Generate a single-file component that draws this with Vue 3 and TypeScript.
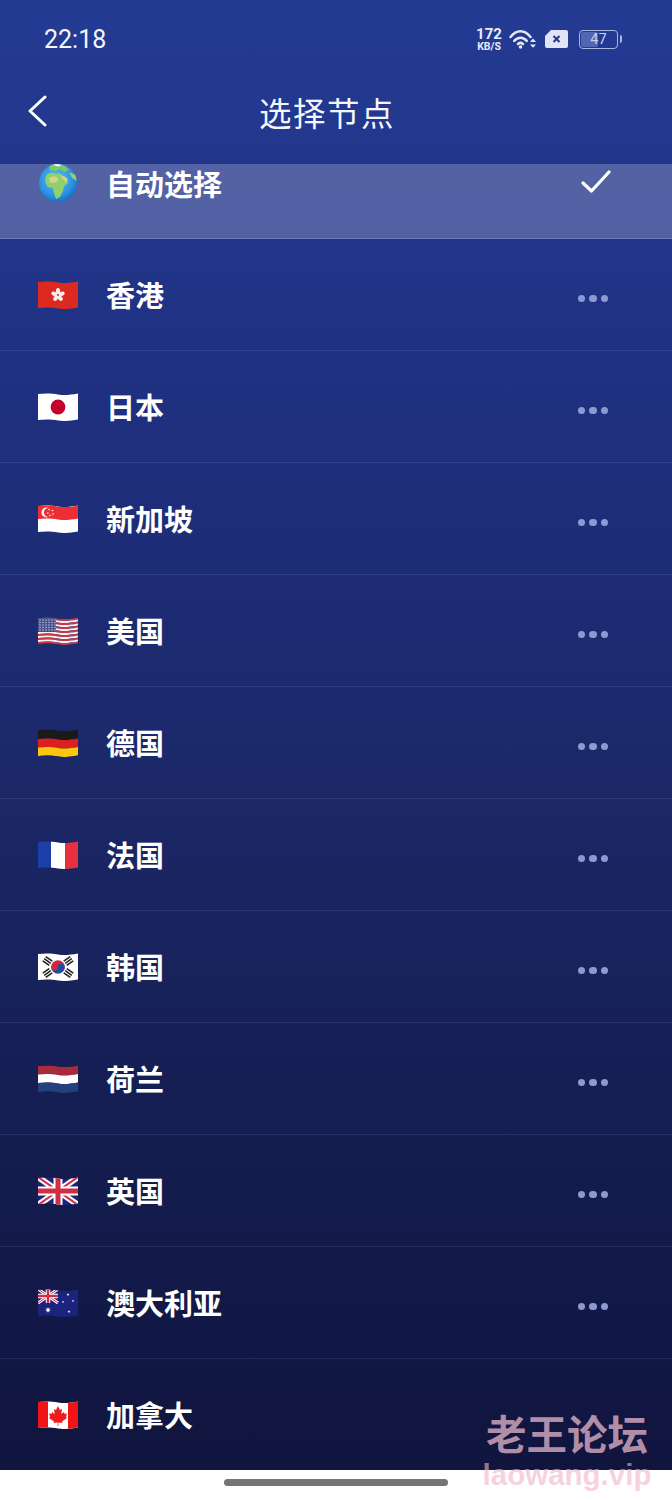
<script setup lang="ts">
const nodes = [
  { code: "hk", name: "香港" },
  { code: "jp", name: "日本" },
  { code: "sg", name: "新加坡" },
  { code: "us", name: "美国" },
  { code: "de", name: "德国" },
  { code: "fr", name: "法国" },
  { code: "kr", name: "韩国" },
  { code: "nl", name: "荷兰" },
  { code: "gb", name: "英国" },
  { code: "au", name: "澳大利亚" },
  { code: "ca", name: "加拿大", noMore: true },
];

// wavy band, the flags are drawn like the waving emoji
const band = (a: number, b: number) =>
  `M0 ${a}C8 ${a - 1} 14 ${a - 0.5} 20 ${a + 0.5}C26 ${a + 1.5} 32 ${a + 1} 40 ${a - 0.5}` +
  `L40 ${b - 0.5}C32 ${b + 1} 26 ${b + 1.5} 20 ${b + 0.5}C14 ${b - 0.5} 8 ${b - 1} 0 ${b}Z`;

const star = (cx: number, cy: number, r: number, n = 5) => {
  const pts: string[] = [];
  for (let i = 0; i < n * 2; i++) {
    const rad = i % 2 ? r * 0.42 : r;
    const a = (Math.PI * i) / n - Math.PI / 2;
    pts.push(`${(cx + rad * Math.cos(a)).toFixed(2)},${(cy + rad * Math.sin(a)).toFixed(2)}`);
  }
  return pts.join(" ");
};

const body = band(1, 27);
const usStripes = Array.from({ length: 13 }, (_, i) => band(1 + i * 2, 3 + i * 2));
const petals = [0, 72, 144, 216, 288];
const auStars = [
  [30, 5.5, 1.5],
  [25, 13, 1.3],
  [35, 12, 1.3],
  [31, 22.5, 1.5],
  [10, 21, 3],
];
const krBars = [
  [9.5, 8, 35],
  [30.5, 8, -35],
  [9.5, 20, -35],
  [30.5, 20, 35],
];
</script>

<template>
  <div class="page">
    <div class="screen">
      <header class="top">
        <div class="status">
          <span class="time">22:18</span>
          <div class="status-icons">
            <div class="speed">
              <span class="speed-num">172</span>
              <span class="speed-unit">KB/S</span>
            </div>
            <svg class="wifi" width="27" height="19" viewBox="0 0 27 19" fill="none" stroke="#e3e8f6" stroke-width="2.5" stroke-linecap="round">
              <path d="M1.5 7C7.5 -.6 15.5 -.6 21.5 7" />
              <path d="M5.2 10.8C9 6.6 14 6.6 17.8 10.8" />
              <path d="M9 14C10.6 12.6 12.4 12.6 14 14" />
              <circle cx="11.5" cy="17" r="1.8" fill="#e3e8f6" stroke="none" />
              <path d="M21 12h6l-3-3.4zM21 14.4h6l-3 3.4z" fill="#e3e8f6" stroke="none" />
            </svg>
            <svg class="sim" width="23" height="18" viewBox="0 0 23 18">
              <path d="M6 0H21a2 2 0 0 1 2 2V16a2 2 0 0 1-2 2H2a2 2 0 0 1-2-2V6z" fill="#dfe5f5" />
              <path d="M8.5 6l6 6M14.5 6l-6 6" stroke="#26397f" stroke-width="2" />
            </svg>
            <div class="battery">
              <div class="battery-fill" style="width: 47%"></div>
              <span class="battery-num">47</span>
              <i class="battery-nib"></i>
            </div>
          </div>
        </div>
        <nav class="bar">
          <svg class="back" width="20" height="32" viewBox="0 0 20 32" fill="none" stroke="#fff" stroke-width="3" stroke-linecap="round" stroke-linejoin="round">
            <path d="M18 2L3 16l15 14" />
          </svg>
          <h1 class="title">选择节点</h1>
        </nav>
      </header>

      <main class="list">
        <div class="row row-active">
          <svg class="flag globe-icon" width="40" height="40" viewBox="0 0 40 40">
            <defs>
              <radialGradient id="sea" cx="45%" cy="40%" r="65%">
                <stop offset="0" stop-color="#5cc4f2" />
                <stop offset="0.7" stop-color="#2a8fe0" />
                <stop offset="1" stop-color="#1565c0" />
              </radialGradient>
              <clipPath id="globe"><circle cx="20" cy="20" r="19" /></clipPath>
            </defs>
            <circle cx="20" cy="20" r="19" fill="url(#sea)" />
            <g clip-path="url(#globe)">
              <path d="M8 13C10 9 15 9 18 11L21 10C24 13 27 13 29 15L30 20L26 23L25 28L22 34L18 36L16 30L15 25L10 24L7 19Z" fill="#8fd16f" />
              <path d="M22 12C25 13 28 14 30 17L27 19L24 15Z" fill="#d8cf8a" />
              <path d="M11 15C14 13 18 13 20 15L19 19L13 20Z" fill="#d8d489" />
              <path d="M11 2C15 1 22 1 27 3L31 7L26 9L22 6L17 8L12 7Z" fill="#7cc969" />
              <path d="M14 1.5C17 .8 21 .8 24 2L20 3.5Z" fill="#f2f7fb" />
              <path d="M31 9L38 12L39 18L34 15Z" fill="#8fd16f" />
            </g>
          </svg>
          <span class="name">自动选择</span>
          <svg class="check" width="30" height="24" viewBox="0 0 30 24" fill="none" stroke="#fff" stroke-width="3.2" stroke-linecap="round" stroke-linejoin="round">
            <path d="M2 13l8.5 8L28 2" />
          </svg>
        </div>

        <div v-for="node in nodes" :key="node.code" class="row">
          <svg class="flag" width="40" height="28" viewBox="0 0 40 28">
            <defs>
              <clipPath :id="`clip-${node.code}`"><path :d="body" /></clipPath>
            </defs>
            <g :clip-path="`url(#clip-${node.code})`">
              <template v-if="node.code === 'hk'">
                <rect width="40" height="28" fill="#dc2a20" />
                <ellipse v-for="a in petals" :key="a" cx="20" cy="10.4" rx="2.1" ry="3.3" fill="#fdeeee" :transform="`rotate(${a} 20 14)`" />
                <circle cx="20" cy="14" r="1" fill="#dc2a20" />
              </template>

              <template v-else-if="node.code === 'jp'">
                <rect width="40" height="28" fill="#fff" />
                <circle cx="20" cy="14" r="7.4" fill="#c4002b" />
              </template>

              <template v-else-if="node.code === 'sg'">
                <rect width="40" height="28" fill="#fff" />
                <path :d="band(1, 14)" fill="#ee2e35" />
                <circle cx="8.5" cy="7.5" r="5" fill="#fff" />
                <circle cx="10.5" cy="7.5" r="4.6" fill="#ee2e35" />
                <circle v-for="p in [[11, 4.5], [14.5, 5.5], [15, 9], [12, 10.5], [9.8, 8]]" :key="p[0] + '-' + p[1]" :cx="p[0]" :cy="p[1]" r="0.8" fill="#fff" />
              </template>

              <template v-else-if="node.code === 'us'">
                <path v-for="(d, i) in usStripes" :key="i" :d="d" :fill="i % 2 ? '#f6f2f2' : '#c4384a'" />
                <rect width="18" height="15" fill="#47508c" />
                <g fill="#d6d9ec">
                  <template v-for="y in [3, 5.5, 8, 10.5, 13]" :key="y">
                    <circle v-for="x in [2, 5, 8, 11, 14, 17]" :key="x" :cx="x" :cy="y" r="0.65" />
                  </template>
                </g>
              </template>

              <template v-else-if="node.code === 'de'">
                <path :d="band(1, 10)" fill="#1a1a1a" />
                <path :d="band(10, 18.5)" fill="#dc1f1f" />
                <path :d="band(18.5, 27)" fill="#fbc80f" />
              </template>

              <template v-else-if="node.code === 'fr'">
                <rect width="13" height="28" fill="#1c3fa8" />
                <rect x="13" width="14" height="28" fill="#fff" />
                <rect x="27" width="13" height="28" fill="#e8303e" />
              </template>

              <template v-else-if="node.code === 'kr'">
                <rect width="40" height="28" fill="#fff" />
                <path d="M13.2 14a6.8 6.8 0 0 1 13.6 0z" fill="#d2283c" />
                <path d="M13.2 14a6.8 6.8 0 0 0 13.6 0z" fill="#1f4ea1" />
                <circle cx="16.6" cy="14" r="3.4" fill="#d2283c" />
                <circle cx="23.4" cy="14" r="3.4" fill="#1f4ea1" />
                <g v-for="b in krBars" :key="b[0] + '-' + b[1]" fill="#222" :transform="`rotate(${b[2]} ${b[0]} ${b[1]})`">
                  <rect :x="b[0] - 4" :y="b[1] - 3.4" width="8" height="1.6" />
                  <rect :x="b[0] - 4" :y="b[1] - 0.8" width="8" height="1.6" />
                  <rect :x="b[0] - 4" :y="b[1] + 1.8" width="8" height="1.6" />
                </g>
              </template>

              <template v-else-if="node.code === 'nl'">
                <path :d="band(1, 9.5)" fill="#a92a3a" />
                <path :d="band(9.5, 18)" fill="#fff" />
                <path :d="band(18, 27)" fill="#25407f" />
              </template>

              <template v-else-if="node.code === 'gb' || node.code === 'au'">
                <rect width="40" height="28" fill="#1a237e" />
                <g :transform="node.code === 'au' ? 'scale(.5)' : ''">
                  <path d="M0 0L40 28M40 0L0 28" stroke="#fff" stroke-width="6" />
                  <path d="M0 0L40 28M40 0L0 28" stroke="#cf2e45" stroke-width="2" />
                  <path d="M20 0V28M0 14H40" stroke="#fff" stroke-width="9" />
                  <path d="M20 0V28M0 14H40" stroke="#cf2e45" stroke-width="5" />
                </g>
                <template v-if="node.code === 'au'">
                  <polygon v-for="s in auStars" :key="s[0]" :points="star(s[0], s[1], s[2], s[0] === 10 ? 7 : 5)" fill="#fff" />
                </template>
              </template>

              <template v-else-if="node.code === 'ca'">
                <rect width="40" height="28" fill="#fff" />
                <rect width="10" height="28" fill="#f01414" />
                <rect x="30" width="10" height="28" fill="#f01414" />
                <path d="M20 5L22 9L24 8L23.4 13L26 11L26.6 13L29 12.6L28 16L29 17L24 20.5L24.4 22L20.4 21.4V25H19.6V21.4L15.6 22L16 20.5L11 17L12 16L11 12.6L13.4 13L14 11L16.6 13L16 8L18 9Z" fill="#ee1c1c" />
              </template>
            </g>
          </svg>
          <span class="name">{{ node.name }}</span>
          <div v-if="!node.noMore" class="more">
            <i></i><i></i><i></i>
          </div>
        </div>
      </main>
    </div>

    <footer class="foot">
      <div class="home"></div>
    </footer>

    <div class="mark">
      <div class="mark-cn">老王论坛</div>
      <div class="mark-en">laowang.vip</div>
    </div>
  </div>
</template>

<style scoped>
.page {
  position: relative;
  width: 672px;
  height: 1500px;
  overflow: hidden;
  background: #fff;
  font-family: "Noto Sans CJK SC", "Noto Sans", sans-serif;
}

.screen {
  height: 1470px;
  display: flex;
  flex-direction: column;
  background: linear-gradient(180deg, #243b94 0%, #1f2f7e 30%, #1b2766 55%, #141c4e 80%, #10153e 100%);
  color: #fff;
}

.top {
  height: 164px;
  flex: none;
}

.status {
  height: 76px;
  padding: 2px 54px 0 44px;
  box-sizing: border-box;
  display: flex;
  align-items: center;
  justify-content: space-between;
}

.time {
  font-family: Roboto, sans-serif;
  font-size: 25px;
  color: #f4f6fc;
}

.status-icons {
  display: flex;
  align-items: center;
}

.speed {
  width: 28px;
  display: flex;
  flex-direction: column;
  align-items: center;
  margin-right: 6px;
  font-family: Roboto, sans-serif;
  font-weight: 700;
  color: #e8ecf8;
}

.speed-num {
  font-size: 15px;
  line-height: 14px;
}

.speed-unit {
  font-size: 10.5px;
  line-height: 11px;
}

.sim {
  margin-left: 9px;
}

.battery {
  position: relative;
  width: 39px;
  height: 19px;
  margin-left: 11px;
  border: 1.5px solid #a9b6e2;
  border-radius: 4px;
  box-sizing: border-box;
  display: flex;
  align-items: center;
  justify-content: center;
}

.battery-fill {
  position: absolute;
  left: 1px;
  top: 1px;
  bottom: 1px;
  background: rgba(170, 185, 235, 0.35);
  border-radius: 2px;
}

.battery-num {
  position: relative;
  font-family: Roboto, sans-serif;
  font-size: 14.5px;
  color: #c9d2ef;
}

.battery-nib {
  position: absolute;
  right: -5px;
  top: 4px;
  width: 2px;
  height: 8px;
  background: #a9b6e2;
  border-radius: 0 2px 2px 0;
}

.bar {
  position: relative;
  height: 74px;
  display: flex;
  align-items: center;
  justify-content: center;
}

.back {
  position: absolute;
  left: 27px;
  top: 19px;
}

.title {
  margin: -3px 0 0 -18px;
  font-size: 32.5px;
  font-weight: 400;
  letter-spacing: 1.5px;
  color: #f4f6fc;
}

.list {
  flex: 1;
  overflow: hidden;
}

.row {
  height: 112px;
  box-sizing: border-box;
  padding: 0 64px 0 38px;
  display: flex;
  align-items: center;
  border-bottom: 1px solid rgba(160, 175, 230, 0.13);
}

/* list is scrolled, first row is partly under the header */
.row-active {
  height: 75px;
  padding-right: 61px;
  align-items: flex-start;
  background: rgba(255, 255, 255, 0.22);
  border-bottom-color: #6c7cb8;
}

.row-active .name {
  line-height: 40px;
  margin-top: -1px;
}

.flag {
  flex: none;
  margin-right: 28px;
}

.globe-icon {
  margin-top: -1px;
}

.name {
  flex: 1;
  margin-top: -2px;
  font-size: 29px;
  font-weight: 700;
  color: #fff;
}

.check {
  flex: none;
  margin-top: 6px;
}

.more {
  display: flex;
  gap: 4px;
  margin-top: 8px;
}

.more i {
  width: 7.5px;
  height: 7.5px;
  border-radius: 50%;
  background: #8d9ad2;
}

.foot {
  height: 30px;
  display: flex;
  justify-content: center;
  padding-top: 9px;
  box-sizing: border-box;
}

.home {
  width: 224px;
  height: 7px;
  border-radius: 4px;
  background: #757575;
}

/* watermark sits over the screenshot */
.mark {
  position: absolute;
  right: 20px;
  top: 1408px;
  width: 170px;
  text-align: center;
  font-weight: 700;
}

.mark-cn {
  font-size: 40.5px;
  height: 50px;
  line-height: 50px;
  color: rgba(240, 190, 210, 0.72);
  white-space: nowrap;
}

.mark-en {
  font-family: "Liberation Sans", sans-serif;
  font-size: 29.5px;
  line-height: 34px;
  color: rgba(240, 180, 200, 0.6);
  white-space: nowrap;
}
</style>
